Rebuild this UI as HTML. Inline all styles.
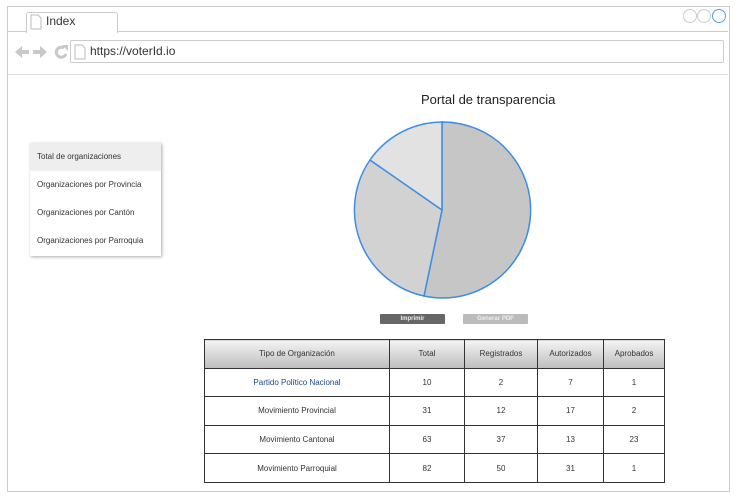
<!DOCTYPE html>
<html><head><style>
body{margin:0;width:738px;height:498px;background:#fff;font-family:"Liberation Sans",sans-serif;position:relative;overflow:hidden}
.a{position:absolute}
.menu div{height:28px;line-height:28px;padding-left:7px;font-size:8px;color:#333}
table{border-collapse:collapse;font-size:8px;color:#333}
td,th{border:1px solid #333;text-align:center;padding:0;font-weight:normal}
th{height:27px;background:linear-gradient(#f4f4f4,#bdbdbd)}
td{height:27px}
</style></head><body>
<div class="a" style="left:7px;top:6px;width:721px;height:484px;border:1px solid #ccc"></div>
<div class="a" style="left:8px;top:31px;width:720px;border-top:1px solid #ccc"></div>
<div class="a" style="left:26px;top:12px;width:90px;height:20px;border:1px solid #ccc;border-bottom:none;border-radius:3px 3px 0 0;background:#fff"></div>
<svg class="a" style="left:30px;top:14px" width="12" height="16"><path d="M1 1h7l3 3v11H1z" fill="#fff" stroke="#bbb"/></svg>
<div class="a" style="left:46px;top:14px;font-size:12px;color:#333">Index</div>
<svg class="a" style="left:682px;top:8px" width="46" height="16"><circle cx="8" cy="8" r="6.5" fill="none" stroke="#ccc"/><circle cx="22" cy="8" r="6.5" fill="none" stroke="#ccc"/><circle cx="37" cy="8" r="6.5" fill="none" stroke="#4a9ff0"/></svg>
<svg class="a" style="left:14px;top:44px" width="56" height="16"><path d="M1 8l7-6v4h7v4H8v4z" fill="#c8c8c8"/><path d="M33 8l-7-6v4h-7v4h7v4z" fill="#c8c8c8"/><path d="M50 4a5 5 0 1 0 2 6" fill="none" stroke="#c8c8c8" stroke-width="3"/><path d="M48 1h6v6z" fill="#c8c8c8"/></svg>
<div class="a" style="left:70px;top:40px;width:652px;height:21px;border:1px solid #ccc;border-radius:2px"></div>
<svg class="a" style="left:74px;top:44px" width="12" height="16"><path d="M1 1h7l3 3v11H1z" fill="#fff" stroke="#bbb"/></svg>
<div class="a" style="left:90px;top:44px;font-size:12px;color:#333">https://voterId.io</div>
<div class="a" style="left:8px;top:74px;width:720px;border-top:1px solid #ddd"></div>
<div class="a" style="left:421px;top:92px;font-size:13px;color:#222">Portal de transparencia</div>
<div class="a menu" style="left:30px;top:143px;width:131px;height:113px;box-shadow:1px 1px 3px #aaa;background:#fff">
<div style="background:#eee">Total de organizaciones</div><div>Organizaciones por Provincia</div><div>Organizaciones por Cantón</div><div>Organizaciones por Parroquia</div></div>
<svg class="a" style="left:0;top:0" width="738" height="498">
<path d="M442 210L442 122A88 88 0 1 1 424 296Z" fill="#c6c6c6" stroke="#3a8ee6" stroke-width="1.5"/>
<path d="M442 210L424 296A88 88 0 0 1 370 160Z" fill="#d2d2d2" stroke="#3a8ee6" stroke-width="1.5"/>
<path d="M442 210L370 160A88 88 0 0 1 442 122Z" fill="#e2e2e2" stroke="#3a8ee6" stroke-width="1.5"/>
</svg>
<div class="a" style="left:380px;top:314px;width:65px;height:10px;background:#666;color:#eee;font-size:6px;font-weight:bold;line-height:10px;text-align:center;border-radius:1px">Imprimir</div>
<div class="a" style="left:463px;top:314px;width:65px;height:10px;background:#bbb;color:#eee;font-size:6px;font-weight:bold;line-height:10px;text-align:center;border-radius:1px">Generar PDF</div>
<table class="a" style="left:204px;top:339px;width:461px;height:144px">
<tr><th style="width:184px">Tipo de Organización</th><th style="width:74px">Total</th><th style="width:72px">Registrados</th><th style="width:65px">Autorizados</th><th>Aprobados</th></tr>
<tr><td style="color:#1a4a8a">Partido Político Nacional</td><td>10</td><td>2</td><td>7</td><td>1</td></tr>
<tr><td>Movimiento Provincial</td><td>31</td><td>12</td><td>17</td><td>2</td></tr>
<tr><td>Movimiento Cantonal</td><td>63</td><td>37</td><td>13</td><td>23</td></tr>
<tr><td>Movimiento Parroquial</td><td>82</td><td>50</td><td>31</td><td>1</td></tr>
</table>
</body></html>
